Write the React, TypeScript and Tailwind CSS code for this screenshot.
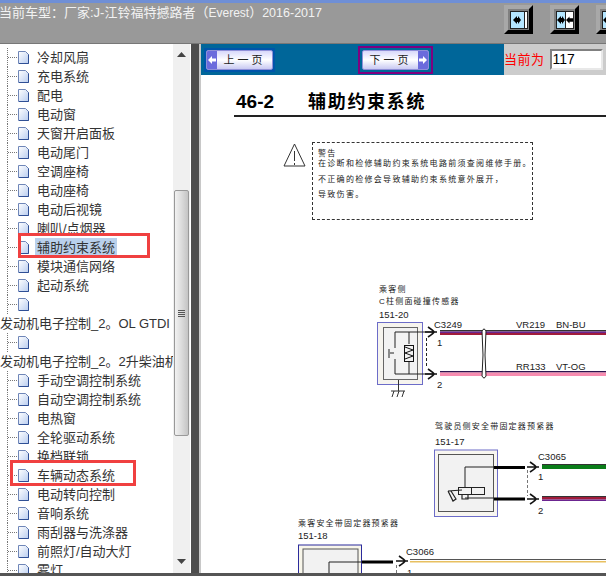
// App.tsx
// Repair manual viewer - tree on the left, scanned page with wiring diagram on the right

const treeRows = [
  { label: '冷却风扇' },
  { label: '充电系统' },
  { label: '配电' },
  { label: '电动窗' },
  { label: '天窗开启面板' },
  { label: '电动尾门' },
  { label: '空调座椅' },
  { label: '电动座椅' },
  { label: '电动后视镜' },
  { label: '喇叭/点烟器' },
  { label: '辅助约束系统', selected: true },
  { label: '模块通信网络' },
  { label: '起动系统' },
  { label: '' },
  { label: '发动机电子控制_2。OL GTDI', root: true },
  { label: '' },
  { label: '发动机电子控制_2。2升柴油机', root: true },
  { label: '手动空调控制系统' },
  { label: '自动空调控制系统' },
  { label: '电热窗' },
  { label: '全轮驱动系统' },
  { label: '换档联锁' },
  { label: '车辆动态系统' },
  { label: '电动转向控制' },
  { label: '音响系统' },
  { label: '雨刮器与洗涤器' },
  { label: '前照灯/自动大灯' },
  { label: '雾灯' },
];

function DocIcon() {
  return (
    <svg width="13" height="15" viewBox="0 0 13 15" className="shrink-0">
      <defs>
        <linearGradient id="docFill" x1="0" y1="0" x2="1" y2="1">
          <stop offset="0" stopColor="#ffffff" />
          <stop offset="1" stopColor="#b9cdf0" />
        </linearGradient>
      </defs>
      <path d="M1.5 1.5H8.5L11.5 4.5V13.5H1.5Z" fill="url(#docFill)" stroke="#6f86b8" />
      <path d="M11.5 4.5V13.5H2" fill="none" stroke="#2f4f95" />
    </svg>
  );
}

function TreeRow({ label, selected, root }: { label: string; selected?: boolean; root?: boolean }) {
  if (root) {
    return <div className="h-[19px] leading-[19px] text-[13px] text-[#333] whitespace-nowrap">{label}</div>;
  }
  return (
    <div className="h-[19px] flex items-center whitespace-nowrap">
      <div className="ml-[7px] w-[10px] h-full flex items-center border-l border-dotted border-[#777]">
        <div className="w-full border-t border-dotted border-[#777]" />
      </div>
      <DocIcon />
      {label && (
        <span className={`ml-[5px] px-[2px] leading-[19px] text-[13px] text-[#333] ${selected ? 'bg-[#b9d0ec]' : ''}`}>
          {label}
        </span>
      )}
    </div>
  );
}

function Scrollbar() {
  return (
    <div className="w-[17px] h-full bg-[#f0f0f0] flex flex-col items-center relative">
      <svg width="9" height="5" viewBox="0 0 9 5" className="mt-[8px] shrink-0">
        <path d="M4.5 0L9 5H0Z" fill="#444" />
      </svg>
      <div className="mt-[133px] w-[15px] h-[246px] shrink-0 rounded-[2px] border border-[#999] bg-gradient-to-r from-[#f2f2f2] via-[#dcdcdc] to-[#c4c4c4] flex flex-col items-center justify-center gap-[1px]">
        <div className="w-[7px] h-px bg-[#555]" />
        <div className="w-[7px] h-px bg-[#555]" />
        <div className="w-[7px] h-px bg-[#555]" />
        <div className="w-[7px] h-px bg-[#555]" />
      </div>
      <svg width="9" height="5" viewBox="0 0 9 5" className="mt-[123px] shrink-0">
        <path d="M0 0H9L4.5 5Z" fill="#444" />
      </svg>
    </div>
  );
}

function FrameButton({ double }: { double?: boolean }) {
  return (
    <div className="w-[29px] h-[29px] shrink-0 bg-[#808080] border-[4px] border-t-[#a8a8a8] border-l-[#a8a8a8] border-r-black border-b-black flex items-center justify-center">
      <div className="w-[18px] h-[18px] border border-[#222] flex">
        <div className={`${double ? 'w-1/2' : 'flex-1'} bg-[#b5e6ff] flex items-center justify-center`}>
          <svg width="8" height="10" viewBox="0 0 8 10">
            <path d="M0 5L4 1V3H5V1L8 5L5 9V7H4V9Z" fill="#000" />
          </svg>
        </div>
        <div className={`${double ? 'w-1/2' : 'w-[3px]'} bg-white flex items-center justify-center border-l border-[#222]`}>
          {double && (
            <svg width="8" height="10" viewBox="0 0 8 10">
              <path d="M0 5L4 1V9Z M4 3H8V7H4Z" fill="#000" />
            </svg>
          )}
        </div>
      </div>
    </div>
  );
}

function PageButton({ label, next }: { label: string; next?: boolean }) {
  const arrow = (
    <div className="w-[10px] h-full bg-[#6b6bdc] flex items-center justify-center">
      <svg width="8" height="8" viewBox="0 0 8 8">
        <path d={next ? 'M0 2.5H4V0L8 4L4 8V5.5H0Z' : 'M8 2.5H4V0L0 4L4 8V5.5H8Z'} fill="#fff" />
      </svg>
    </div>
  );
  return (
    <div className="w-[67px] h-[20px] rounded-[2px] border border-[#8f8fd8] bg-gradient-to-b from-[#d8d8fa] via-white to-[#c9c9f2] flex items-center overflow-hidden">
      {!next && arrow}
      <span className="flex-1 text-center text-[11px] leading-[18px] text-[#222] tracking-[3px]">{label}</span>
      {next && arrow}
    </div>
  );
}

// Connector chevron of the wiring diagram
function Pin({ x, y }: { x: number; y: number }) {
  return (
    <path
      d={`M${x - 3} ${y - 5}Q${x + 3} ${y - 1} ${x + 3} ${y}Q${x + 3} ${y + 1} ${x - 3} ${y + 5}M${x - 6} ${y}H${x + 6}`}
      fill="none"
      stroke="#111"
      strokeWidth="1.6"
    />
  );
}

function WiringDiagram() {
  const text = { fontSize: 9.5, fill: '#222' };
  const zh = { fontSize: 8, fill: '#222', letterSpacing: 1.2 };
  return (
    <svg width="405" height="348" viewBox="201 225 405 348" className="block">
      {/* Side impact sensor */}
      <text x="379" y="292" {...zh}>乘客侧</text>
      <text x="379" y="304" {...zh}>C柱侧面碰撞传感器</text>
      <text x="379" y="318" {...text}>151-20</text>
      <rect x="377.5" y="322.5" width="45" height="62" fill="#f6f4ee" stroke="#6c6cc8" />
      <rect x="383.5" y="327.5" width="34" height="52" fill="#f2f2f2" stroke="#666" />
      <path d="M395 332H433M395 374H433M409 332V344M409 362V374" fill="none" stroke="#222" />
      <rect x="404.5" y="345.5" width="9" height="16" fill="none" stroke="#111" />
      <path d="M405 347L413 350L405 353L413 356L405 359" fill="none" stroke="#111" />
      <path d="M395 332V348M395 359V374M389 349V358M390 353H394" fill="none" stroke="#222" />
      <path d="M398.5 380V391M391 391H405M392 397L394 391M397 397L399 391M402 397L404 391" fill="none" stroke="#333" />
      <path d="M426.5 338V368" stroke="#222" strokeDasharray="3 2" />
      <Pin x={431} y={332} />
      <Pin x={431} y={374} />
      <text x="434" y="328" {...text}>C3249</text>
      <text x="437" y="346" {...text}>1</text>
      <text x="437" y="388" {...text}>2</text>
      <rect x="440" y="330" width="166" height="1.5" fill="#333" />
      <rect x="440" y="331.5" width="166" height="1.5" fill="#6b2590" />
      <rect x="440" y="333" width="166" height="2" fill="#a01c3a" />
      <rect x="440" y="371" width="166" height="1.5" fill="#2c1450" />
      <rect x="440" y="372.5" width="166" height="3.5" fill="#f78cb0" />
      <path d="M482 331Q484 327 486 331L485 355L486 376Q484 380 482 376L483 355Z" fill="#fff" stroke="#222" />
      <text x="516" y="328" {...text}>VR219</text>
      <text x="556" y="328" {...text}>BN-BU</text>
      <text x="516" y="370" {...text}>RR133</text>
      <text x="556" y="370" {...text}>VT-OG</text>

      {/* Driver belt pretensioner */}
      <text x="435" y="429" {...zh}>驾驶员侧安全带固定器预紧器</text>
      <text x="435" y="445" {...text}>151-17</text>
      <rect x="434.5" y="450" width="63" height="66.5" fill="#f8f6f0" stroke="#6c6cc8" />
      <rect x="438.5" y="454.5" width="55" height="57" fill="#f2f2f2" stroke="#555" />
      <path d="M465 487V467H494M465 498H494" fill="none" stroke="#222" />
      <rect x="458.5" y="487.5" width="13" height="7" fill="#f2f2f2" stroke="#222" />
      <rect x="471.5" y="487.5" width="13" height="7" fill="#f2f2f2" stroke="#222" />
      <path d="M448 491L462 490M448 491L453 501L456 499L451 491M462 495V499H468V495" fill="none" stroke="#222" strokeWidth="1.2" />
      <rect x="494" y="466" width="31" height="3" fill="#000" />
      <rect x="494" y="497.5" width="31" height="3" fill="#000" />
      <path d="M527.5 470V496" stroke="#777" strokeDasharray="3 2" />
      <Pin x={533} y={467} />
      <Pin x={533} y={499} />
      <text x="538" y="460" {...text}>C3065</text>
      <text x="538" y="480" {...text}>1</text>
      <text x="538" y="514" {...text}>2</text>
      <rect x="542" y="464" width="64" height="1" fill="#333" />
      <rect x="542" y="465" width="64" height="4" fill="#0b7d1a" />
      <rect x="542" y="496" width="64" height="1" fill="#333" />
      <rect x="542" y="497" width="64" height="2.5" fill="#a01c3a" />
      <rect x="542" y="499.5" width="64" height="1.5" fill="#6b2590" />

      {/* Passenger belt pretensioner */}
      <text x="298" y="526" {...zh}>乘客安全带固定器预紧器</text>
      <text x="298" y="539" {...text}>151-18</text>
      <rect x="298.5" y="545" width="63" height="40" fill="#f8f6ea" stroke="#2b2b9c" />
      <rect x="303" y="549" width="55" height="40" fill="#f2f2f2" stroke="#555" />
      <path d="M329 580V562H362" fill="none" stroke="#222" />
      <rect x="362" y="560.5" width="31" height="3" fill="#000" />
      <path d="M396.5 565V573" stroke="#777" strokeDasharray="3 2" />
      <Pin x={402} y={561} />
      <text x="406" y="555" {...text}>C3066</text>
      <text x="407" y="576" {...text}>1</text>
      <rect x="410" y="559" width="196" height="1" fill="#555" />
      <rect x="410" y="561" width="196" height="1.5" fill="#e8c060" />
    </svg>
  );
}

function DocumentPage() {
  return (
    <div className="flex-1 bg-white overflow-hidden">
      <div className="ml-[33px] h-[42px] border-b-2 border-[#222] flex items-end pb-[1px] text-black font-bold">
        <span className="ml-[2px] w-[72px] text-[19px] leading-[24px]">46-2</span>
        <span className="text-[18px] leading-[24px] tracking-[1.7px]">辅助约束系统</span>
      </div>
      <div className="h-[108px] flex items-start pt-[25px] pl-[82px]">
        <svg width="23" height="24" viewBox="0 0 23 24" className="mt-px shrink-0">
          <path d="M11.5 1L22 23H1Z" fill="none" stroke="#333" />
          <path d="M11.5 8V18M11.5 20V22" stroke="#333" />
        </svg>
        <div className="ml-[6px] w-[221px] h-[78px] border border-dashed border-[#333] px-[5px] pt-[6px] text-[8px] leading-[10px] tracking-[1.3px] text-[#222] whitespace-nowrap">
          <div>警告</div>
          <div>在诊断和检修辅助约束系统电路前须查阅维修手册。</div>
          <div className="mt-[6px]">不正确的检修会导致辅助约束系统意外展开，</div>
          <div className="mt-[5px]">导致伤害。</div>
        </div>
      </div>
      <WiringDiagram />
    </div>
  );
}

export default function App() {
  return (
    <div className="w-[606px] h-[576px] overflow-hidden flex flex-col bg-white [font-family:'Liberation_Sans','Noto_Sans_CJK_SC',sans-serif]">
      {/* Header */}
      <div className="h-[44px] shrink-0 bg-[#999] border-t-[3px] border-[#6f8fd6] border-b border-b-[#777] flex">
        <div className="w-[505px] shrink-0 -ml-px pt-[1px] text-[13px] leading-[18px] text-[#f2f2f2] whitespace-nowrap">
          当前车型：厂家:J-江铃福特撼路者（<span className="text-[12px]">Everest</span>）<span className="text-[12.5px]">2016-2017</span>
        </div>
        <div className="flex gap-[17px] pt-[2px]">
          <FrameButton />
          <FrameButton double />
          <FrameButton double />
        </div>
      </div>

      <div className="flex-1 flex min-h-0">
        {/* Tree panel */}
        <div className="w-[191px] shrink-0 flex relative">
          <div className="w-[173px] shrink-0 overflow-hidden pt-[4px]">
            {treeRows.map((row, i) => (
              <TreeRow key={i} label={row.label} selected={row.selected} root={row.root} />
            ))}
          </div>
          <Scrollbar />
          {/* Red marks drawn over the tree */}
          <div className="absolute left-[18px] top-[189px] w-[132px] h-[25px] border-[3px] border-[#f04040]" />
          <div className="absolute left-[10px] top-[416px] w-[126px] h-[26px] border-[3px] border-[#f04040]" />
        </div>

        <div className="w-[8px] shrink-0 bg-[#4d4d4d]" />
        <div className="w-[2px] shrink-0 bg-[#c8c8c8]" />

        {/* Page panel */}
        <div className="flex-1 min-w-0 flex flex-col">
          <div className="h-[31px] shrink-0 flex">
            <div className="w-[303px] shrink-0 bg-[#006699] flex items-center relative">
              <div className="ml-[3px] p-[2px] bg-[#0055aa]">
                <PageButton label="上一页" />
              </div>
              <div className="ml-[83px] px-[2px] py-[2px] border-2 border-[#800080] bg-[#006699]">
                <PageButton label="下一页" next />
              </div>
            </div>
            <div className="flex-1 bg-[#cccccc] flex items-center">
              <span className="text-[13px] text-[#ff0000] tracking-[0.5px] whitespace-nowrap">当前为</span>
              <input
                readOnly
                value="117"
                className="ml-[5px] w-[53px] h-[21px] shrink-0 bg-white border-2 border-t-[#808080] border-l-[#808080] border-r-[#e8e8e8] border-b-[#e8e8e8] px-[1px] text-[14px] text-black outline-none"
              />
            </div>
          </div>
          <DocumentPage />
        </div>
      </div>

      <div className="h-[3px] shrink-0 bg-[#555]" />
    </div>
  );
}
